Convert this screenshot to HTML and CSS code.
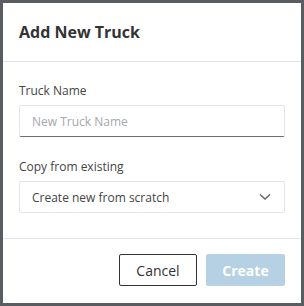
FILE: index.html
```
<!DOCTYPE html>
<html>
<head>
    <title>Add New Truck</title>
    <link rel="stylesheet" href="styles.css">
</head>
<body>
    <div class="modal">
        <div class="modal-header">
            <h1>Add New Truck</h1>
        </div>
        <div class="modal-body">
            <label class="field-label" for="truckName">Truck Name</label>
            <input class="text-input" type="text" id="truckName" placeholder="New Truck Name">
            <label class="field-label" for="copyFrom">Copy from existing</label>
            <div class="select-box" id="copyFrom">
                <span>Create new from scratch</span>
                <svg class="chevron" width="12" height="8" viewBox="0 0 12 8">
                    <path d="M1 1.5 L6 6 L11 1.5" fill="none" stroke="#666" stroke-width="1.5"/>
                </svg>
            </div>
        </div>
        <div class="modal-footer">
            <button class="btn btn-cancel">Cancel</button>
            <button class="btn btn-create" disabled>Create</button>
        </div>
    </div>
</body>
</html>
```
FILE: styles.css
```
html, body {
    margin: 0;
    height: 100%;
}
body {
    background: #595c61;
    padding: 3px;
    box-sizing: border-box;
    font-family: "Open Sans", "Noto Sans", sans-serif;
    color: #333;
}
.modal {
    background: #fff;
    height: 100%;
    display: flex;
    flex-direction: column;
}
.modal-header {
    height: 58px;
    display: flex;
    align-items: center;
    padding: 0 16px;
    border-bottom: 1px solid #e3e3e8;
}
.modal-header h1 {
    margin: 0;
    font-size: 16px;
    font-weight: 700;
    color: #333;
}
.modal-body {
    padding: 20px 16px 25px;
    display: flex;
    flex-direction: column;
    border-bottom: 1px solid #e3e3e8;
}
.field-label {
    font-size: 12px;
    color: #444;
    line-height: 18px;
    margin-bottom: 5px;
}
.text-input {
    height: 32px;
    box-sizing: border-box;
    border: 1px solid #e3e3e8;
    border-bottom: 1px solid #6b7078;
    border-radius: 2px;
    padding: 0 12px;
    font-family: inherit;
    font-size: 12px;
    margin: 0 0 21px;
}
.text-input::placeholder {
    color: #a5a8ad;
}
.select-box {
    height: 32px;
    box-sizing: border-box;
    border: 1px solid #e3e3e8;
    border-radius: 2px;
    padding: 0 12px;
    display: flex;
    align-items: center;
    justify-content: space-between;
    font-size: 12px;
    color: #444;
}
.chevron {
    margin-right: 1px;
}
.modal-footer {
    flex: 1;
    display: flex;
    justify-content: flex-end;
    align-items: flex-start;
    gap: 9px;
    padding: 15px 16px 0;
}
.btn {
    height: 32px;
    font-family: inherit;
    font-size: 14px;
    border-radius: 2px;
    box-sizing: border-box;
}
.btn-cancel {
    width: 78px;
    background: #fff;
    border: 1px solid #333;
    color: #333;
}
.btn-create {
    width: 79px;
    background: #b6d1e3;
    border: none;
    color: #fff;
    font-weight: 700;
}
```
